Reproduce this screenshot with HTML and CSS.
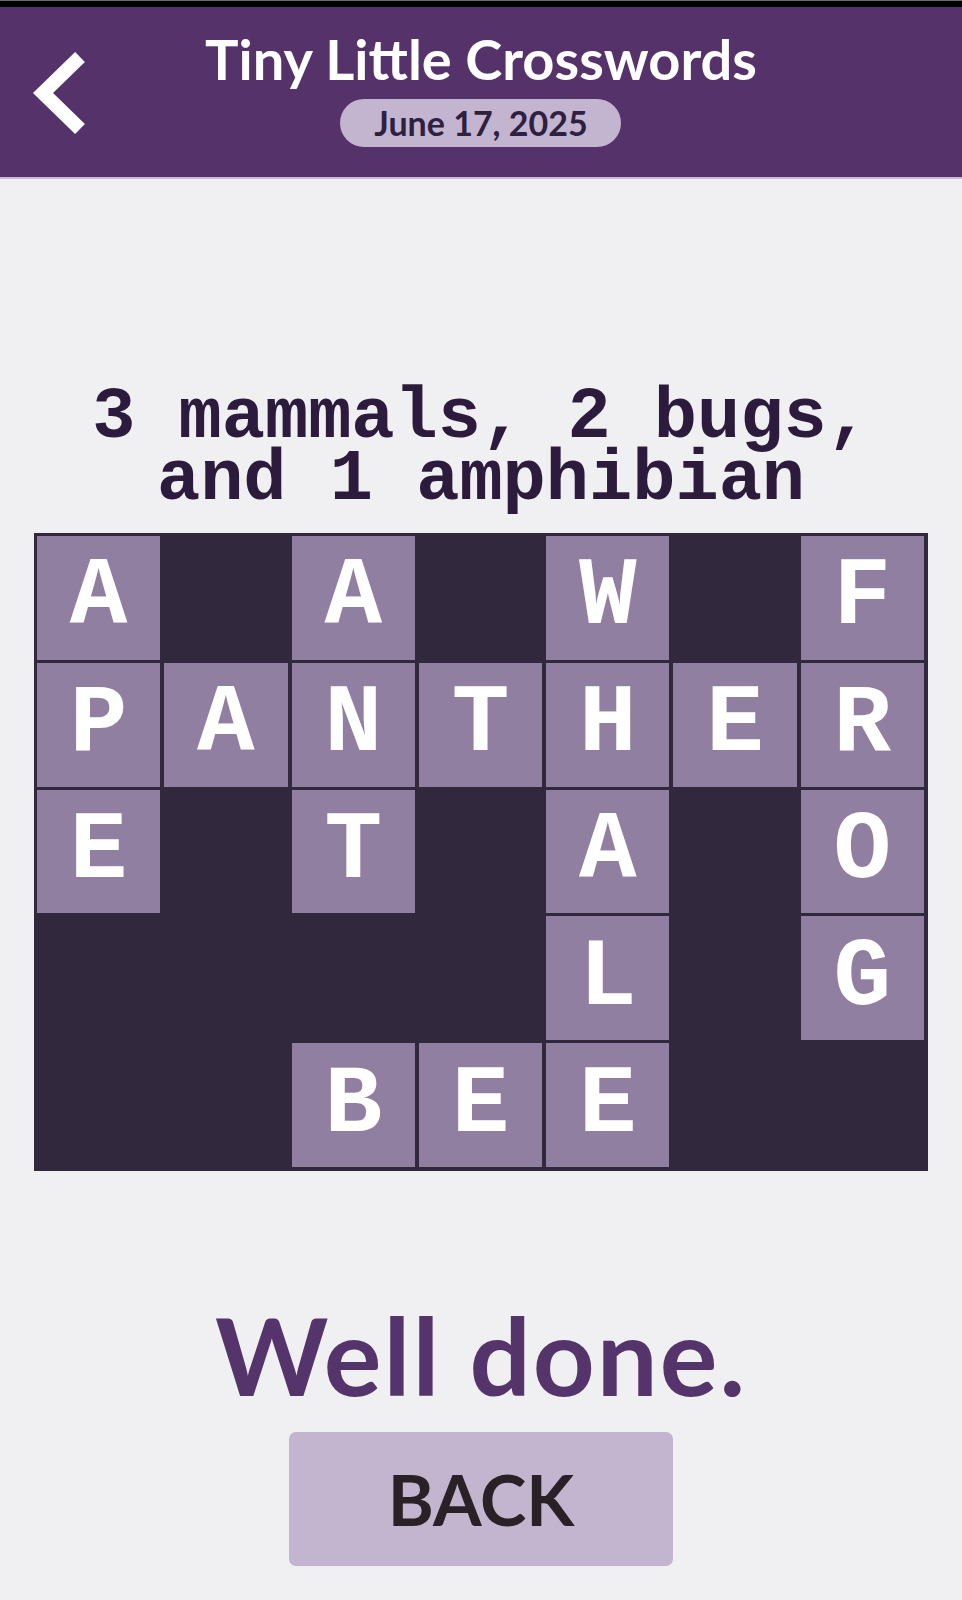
FILE: index.html
```html
<!DOCTYPE html>
<html lang="en">

<head>
  <meta charset="UTF-8" />
  <title>Tiny Little Crosswords</title>
  <meta name="viewport" content="width=device-width, initial-scale=1.0" />
  <link rel="stylesheet" href="styles.css">
</head>

<body>

  <div class="status-strip"></div>

  <header class="app-bar">
    <a class="back-link" href="#" aria-label="Back">
      <svg width="64" height="84" viewBox="0 0 64 84">
        <polyline points="50,6 13,42 50,78" fill="none" stroke="#fff" stroke-width="14" stroke-linejoin="miter" />
      </svg>
    </a>
    <div class="titles">
      <h1>Tiny Little Crosswords</h1>
      <span class="date-pill">June 17, 2025</span>
    </div>
  </header>

  <main class="puzzle">
    <p class="clue">3 mammals, 2 bugs,<br>and 1 amphibian</p>

    <div class="board">
      <!-- row 1 -->
      <div class="cell">A</div>
      <div class="cell empty"></div>
      <div class="cell">A</div>
      <div class="cell empty"></div>
      <div class="cell">W</div>
      <div class="cell empty"></div>
      <div class="cell">F</div>
      <!-- row 2 -->
      <div class="cell">P</div>
      <div class="cell">A</div>
      <div class="cell">N</div>
      <div class="cell">T</div>
      <div class="cell">H</div>
      <div class="cell">E</div>
      <div class="cell">R</div>
      <!-- row 3 -->
      <div class="cell">E</div>
      <div class="cell empty"></div>
      <div class="cell">T</div>
      <div class="cell empty"></div>
      <div class="cell">A</div>
      <div class="cell empty"></div>
      <div class="cell">O</div>
      <!-- row 4 -->
      <div class="cell empty"></div>
      <div class="cell empty"></div>
      <div class="cell empty"></div>
      <div class="cell empty"></div>
      <div class="cell">L</div>
      <div class="cell empty"></div>
      <div class="cell">G</div>
      <!-- row 5 -->
      <div class="cell empty"></div>
      <div class="cell empty"></div>
      <div class="cell">B</div>
      <div class="cell">E</div>
      <div class="cell">E</div>
      <div class="cell empty"></div>
      <div class="cell empty"></div>
    </div>

    <h2 class="result">Well done.</h2>
    <button class="back-btn">BACK</button>
  </main>

</body>

</html>
```

FILE: styles.css
```css
* {
  margin: 0;
  padding: 0;
  box-sizing: border-box;
}

body {
  background: #f0f0f2;
  font-family: 'Lato', 'Noto Sans', sans-serif;
  min-height: 100vh;
}

.status-strip {
  height: 7px;
  background: #000;
  border-top: 1px solid #6a6a6a;
}

.app-bar {
  background: #55336a;
  height: 172px;
  display: grid;
  grid-template-columns: 1fr auto 1fr;
  align-items: start;
  border-bottom: 2px solid #c9b9d6;
}

.back-link {
  display: flex;
  padding: 44px 0 0 30px;
}

.titles {
  display: flex;
  flex-direction: column;
  align-items: center;
  padding-top: 19px;
}

.titles h1 {
  color: #fff;
  font-size: 56px;
  font-weight: 700;
  line-height: 66px;
}

.date-pill {
  margin-top: 7px;
  width: 281px;
  height: 48px;
  border-radius: 24px;
  background: #c3b4d0;
  color: #2e2040;
  font-size: 34px;
  font-weight: 700;
  line-height: 48px;
  text-align: center;
}

.puzzle {
  display: flex;
  flex-direction: column;
  align-items: center;
}

/* the two clue lines sit close together */
.clue {
  margin-top: 208px;
  font-family: 'Liberation Mono', 'Courier New', monospace;
  font-weight: 700;
  font-size: 72px;
  line-height: 62px;
  color: #2d1b3e;
  text-align: center;
}

.board {
  margin-top: 22px;
  width: 894px;
  height: 638px;
  padding: 3px 4px 4px 3px;
  background: #31283d;
  display: grid;
  grid-template-columns: repeat(7, 1fr);
  grid-template-rows: repeat(5, 1fr);
  gap: 3px 4px;
}

.cell {
  background: #917fa1;
  color: #fff;
  font-family: 'Liberation Mono', 'Courier New', monospace;
  font-weight: 700;
  font-size: 96px;
  display: flex;
  align-items: center;
  justify-content: center;
}

.cell.empty {
  background: transparent;
}

.result {
  margin-top: 128px;
  color: #55336b;
  font-size: 108px;
  font-weight: 700;
  line-height: 110px;
  letter-spacing: 2px;
}

.back-btn {
  margin-top: 23px;
  width: 384px;
  height: 134px;
  border: none;
  border-radius: 7px;
  background: #c3b4cf;
  color: #2a2127;
  font-family: 'Lato', 'Noto Sans', sans-serif;
  font-size: 70px;
  font-weight: 700;
  cursor: pointer;
}
```
